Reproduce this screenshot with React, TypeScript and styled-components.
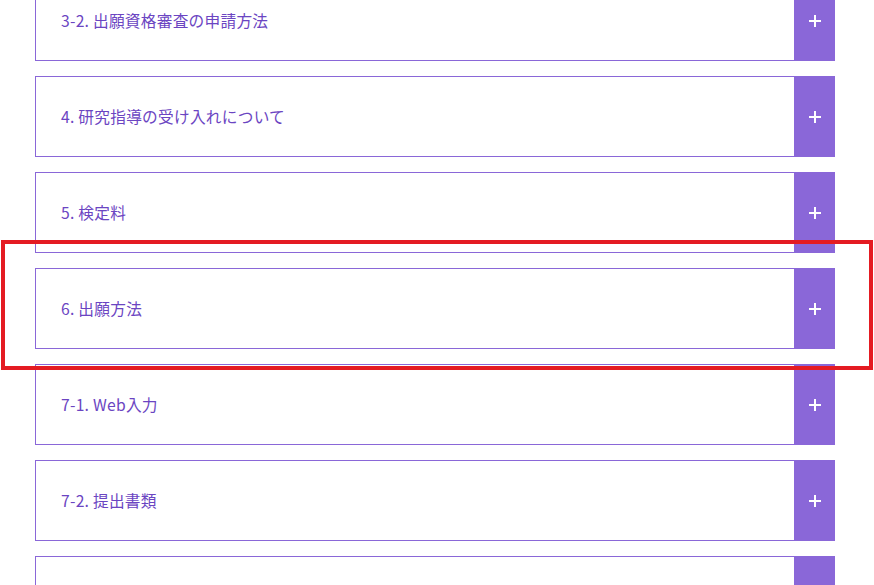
import React from "react";
import styled, { createGlobalStyle } from "styled-components";

const Global = createGlobalStyle`
  html, body { margin: 0; padding: 0; background: #ffffff; }
  body { font-family: "Noto Sans CJK JP", "Noto Sans", sans-serif; overflow: hidden; }
`;

const Page = styled.div`
  position: relative;
  width: 874px;
  height: 585px;
  overflow: hidden;
`;

const List = styled.div`
  display: flex;
  flex-direction: column;
  gap: 15px;
  margin-top: -20px;
  padding-left: 35px;
  width: 800px;
`;

const Row = styled.div`
  display: flex;
  height: 81px;
`;

const Label = styled.div`
  flex: 1;
  display: flex;
  align-items: center;
  box-sizing: border-box;
  border: 1px solid #8a67d8;
  border-right: none;
  padding-left: 25px;
  padding-bottom: 1px;
  color: #6b45c2;
  font-size: 15.7px;
  letter-spacing: 0.25px;
`;

const Toggle = styled.div`
  width: 41px;
  background: #8a67d8;
  display: flex;
  align-items: center;
  justify-content: center;
`;

const Highlight = styled.div`
  position: absolute;
  left: 1px;
  top: 240px;
  width: 872px;
  height: 130px;
  box-sizing: border-box;
  border: 4px solid #e41b22;
  pointer-events: none;
`;

const Plus = () => (
  <svg width="12" height="12" viewBox="0 0 12 12">
    <rect x="5" y="0" width="2" height="12" fill="#fff" />
    <rect x="0" y="5" width="12" height="2" fill="#fff" />
  </svg>
);

const items = [
  "3-2. 出願資格審査の申請方法",
  "4. 研究指導の受け入れについて",
  "5. 検定料",
  "6. 出願方法",
  "7-1. Web入力",
  "7-2. 提出書類",
  "",
];

export default function App() {
  return (
    <Page>
      <Global />
      <List>
        {items.map((t, i) => (
          <Row key={i}>
            <Label>{t}</Label>
            <Toggle>{t && <Plus />}</Toggle>
          </Row>
        ))}
      </List>
      <Highlight />
    </Page>
  );
}
